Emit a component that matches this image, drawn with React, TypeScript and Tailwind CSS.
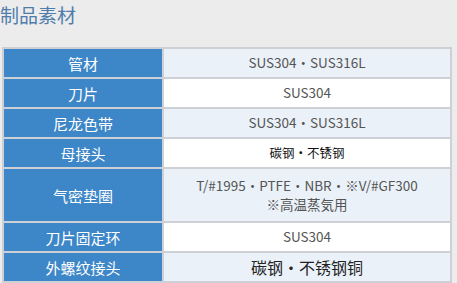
const rows = [
  { label: '管材', value: 'SUS304・SUS316L', tone: 'bg-[#eaf1f9]', text: 'text-[13.5px] text-[#555]' },
  { label: '刀片', value: 'SUS304', tone: 'bg-white', text: 'text-[13.5px] text-[#555]' },
  { label: '尼龙色带', value: 'SUS304・SUS316L', tone: 'bg-[#eaf1f9]', text: 'text-[13.5px] text-[#555]' },
  { label: '母接头', value: '碳钢・不锈钢', tone: 'bg-white', text: 'text-[12.5px] text-[#111]' },
];

const rows2 = [
  { label: '刀片固定环', value: 'SUS304', tone: 'bg-white', text: 'text-[13.5px] text-[#555]' },
  { label: '外螺纹接头', value: '碳钢・不锈钢铜', tone: 'bg-[#eaf1f9]', text: 'text-[16px] text-[#222]' },
];

const Label = ({ children, tall }: { children: string; tall?: boolean }) => (
  <div
    className={`${tall ? 'h-[52px]' : 'h-[28px]'} bg-[#3d86c8] flex items-center justify-center text-white text-[15px]`}
  >
    {children}
  </div>
);

const App = () => {
  return (
    <div
      className="w-[457px] h-[283px] bg-[#ececec] overflow-hidden"
      style={{ fontFamily: '"Noto Sans CJK SC", "Noto Sans", sans-serif' }}
    >
      <h1 className="text-[19px] leading-[28px] text-[#4f7dab] pt-[1px] pl-0">制品素材</h1>

      <div className="mt-[18px] ml-[2px] w-[450px] grid grid-cols-[158px_1fr] gap-[2px] bg-[#cdd1d5] p-[2px] leading-none">
        {rows.map((r) => (
          <div key={r.label} className="contents">
            <Label>{r.label}</Label>
            <div className={`${r.tone} ${r.text} h-[28px] flex items-center justify-center`}>{r.value}</div>
          </div>
        ))}

        <Label tall>气密垫圈</Label>
        <div className="bg-[#eaf1f9] h-[52px] flex flex-col items-center justify-center gap-[6px] text-[13.5px] text-[#555]">
          <span>T/#1995・PTFE・NBR・※V/#GF300</span>
          <span>※高温蒸気用</span>
        </div>

        {rows2.map((r) => (
          <div key={r.label} className="contents">
            <Label>{r.label}</Label>
            <div className={`${r.tone} ${r.text} h-[28px] flex items-center justify-center`}>{r.value}</div>
          </div>
        ))}
      </div>
    </div>
  );
};

export default App;
